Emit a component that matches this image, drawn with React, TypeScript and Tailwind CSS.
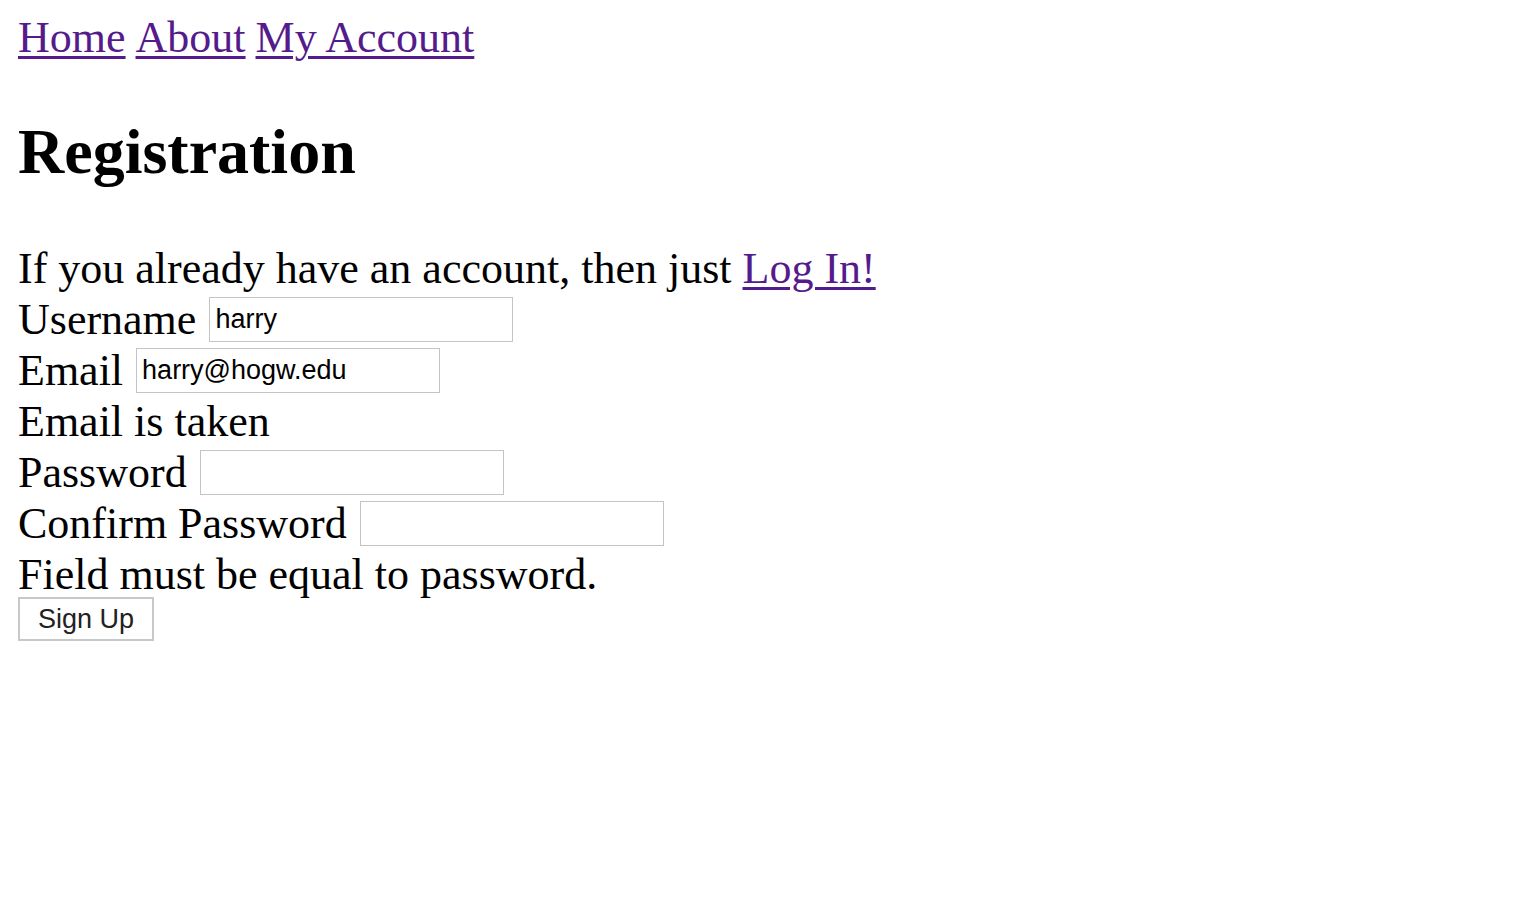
// App.tsx
const linkCls =
  "text-[#551a8b] underline decoration-[3px] underline-offset-[4px]";

const inputCls =
  "h-[45px] w-[304px] border border-[#c4c4c4] bg-white px-[5px] text-[27px] text-black outline-none";

const FieldRow: React.FC<{ label: string; value?: string; type?: string }> = ({
  label,
  value,
  type = "text",
}) => (
  <div className="flex h-[51px] items-center gap-[13px]">
    <label>{label}</label>
    <input
      type={type}
      defaultValue={value}
      className={inputCls}
      style={{ fontFamily: '"Liberation Sans", Arial, sans-serif' }}
    />
  </div>
);

const App: React.FC = () => {
  return (
    <div
      className="min-h-[920px] bg-white px-[18px] pt-[12px] text-[44px] leading-[51px] text-black"
      style={{ fontFamily: '"Liberation Serif", "Times New Roman", serif' }}
    >
      {/* Nav */}
      <nav className="flex gap-[10px]">
        <a href="#" className={linkCls}>
          Home
        </a>
        <a href="#" className={linkCls}>
          About
        </a>
        <a href="#" className={linkCls}>
          My Account
        </a>
      </nav>

      <h1 className="mt-[52px] text-[64px] font-bold leading-[74px]">
        Registration
      </h1>

      <form className="mt-[54px]" onSubmit={(e) => e.preventDefault()}>
        <p>
          If you already have an account, then just{" "}
          <a href="#" className={linkCls}>
            Log In!
          </a>
        </p>
        <FieldRow label="Username" value="harry" />
        <FieldRow label="Email" value="harry@hogw.edu" />
        <p>Email is taken</p>
        <FieldRow label="Password" type="password" />
        <FieldRow label="Confirm Password" type="password" />
        <p>Field must be equal to password.</p>
        <button
          type="submit"
          className="-mt-[3px] block h-[44px] w-[136px] border-2 border-[#c8c8c8] bg-white text-[27px] leading-none text-[#222]"
          style={{ fontFamily: '"Liberation Sans", Arial, sans-serif' }}
        >
          Sign Up
        </button>
      </form>
    </div>
  );
};

export default App;
